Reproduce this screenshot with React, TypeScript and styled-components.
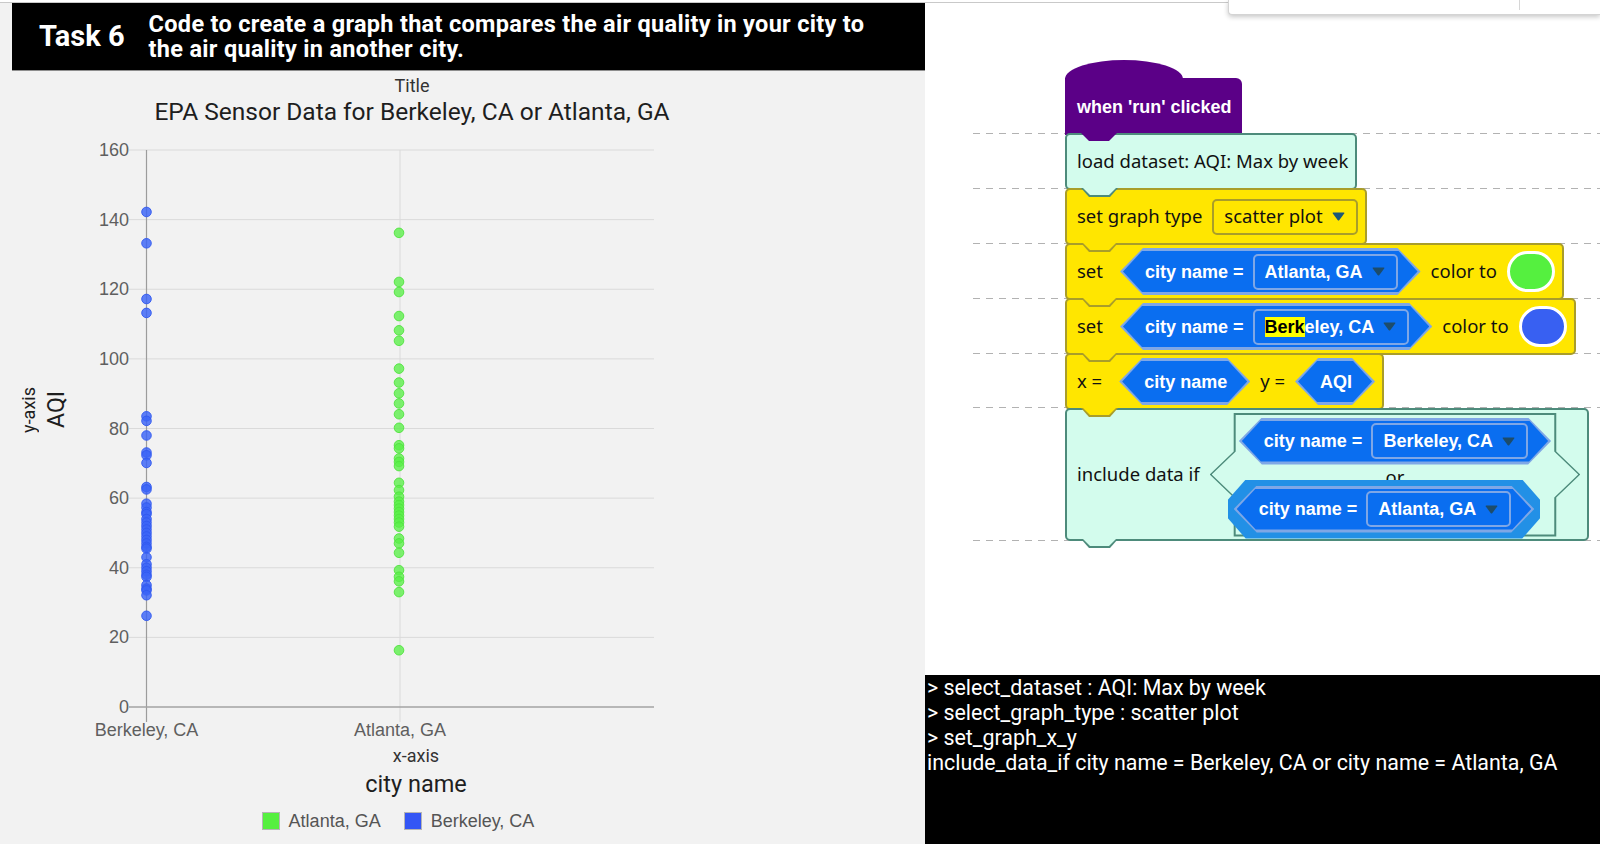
import React from "react";
import styled, { createGlobalStyle } from "styled-components";

const GlobalStyle = createGlobalStyle`
  html, body { margin: 0; padding: 0; background: #ffffff; }
  body { width: 1600px; height: 844px; overflow: hidden; }
  *, *::before, *::after { box-sizing: border-box; }
`;

const SANS = `Roboto, "Liberation Sans", Arial, sans-serif`;
const ARIAL = `"Liberation Sans", Arial, sans-serif`;
const BLOCKFONT = `"Noto Sans", "Liberation Sans", sans-serif`;

const palette = {
  mint: { fill: "#d3fced", line: "#4d8b7b" },
  yellow: { fill: "#ffe600", line: "#a99d2a" },
};
type Tone = keyof typeof palette;

/* ---------- page frame ---------- */
const Page = styled.div`
  position: relative;
  width: 1600px;
  height: 844px;
  display: flex;
  flex-direction: column;
  font-family: ${SANS};
`;
const TopRule = styled.div`
  flex: none;
  height: 3px;
  background: #ffffff;
  border-bottom: 1px solid #c9c9c9;
`;
const Main = styled.main`
  flex: 1;
  min-height: 0;
  display: flex;
`;
const MenuEdge = styled.div`
  position: absolute;
  top: 0;
  right: 0;
  width: 372px;
  height: 15px;
  background: #ffffff;
  border: 1px solid #d4d4d4;
  border-top: none;
  border-right: none;
  border-radius: 0 0 0 4px;
  box-shadow: 0 2px 5px rgba(0, 0, 0, 0.22);
  display: flex;
  justify-content: flex-end;
  padding-right: 80px;
`;
const MenuDivider = styled.span`
  width: 1px;
  height: 10px;
  background: #d6d6d6;
`;

/* ---------- left panel ---------- */
const LeftPanel = styled.section`
  flex: none;
  width: 925px;
  background: #f2f2f2;
  display: flex;
  flex-direction: column;
`;
const Header = styled.header`
  flex: none;
  margin-left: 12px;
  height: 67px;
  background: #000000;
  color: #ffffff;
  display: flex;
  align-items: center;
  gap: 24px;
  padding-left: 27px;
  box-shadow: 0 1px 0 #8e8e8e;
`;
const TaskNumber = styled.h1`
  margin: 0;
  font: 700 29px/1 ${SANS};
  white-space: nowrap;
`;
const TaskText = styled.p`
  margin: 0;
  font: 700 23.5px/25px ${SANS};
  letter-spacing: 0.3px;
  white-space: nowrap;
`;

const Chart = styled.div`
  display: flex;
  flex-direction: column;
  width: 824px;
`;
const CaptionGroup = styled.div<{ $top: number; $left?: number }>`
  margin-top: ${(p) => p.$top}px;
  margin-left: ${(p) => p.$left ?? 0}px;
  display: flex;
  flex-direction: column;
  align-items: center;
  color: #1e1e1e;
`;
const SmallCaption = styled.div`
  font: 400 18px/20px ${SANS};
  color: #333333;
`;
const BigCaption = styled.div<{ $gap: number; $size: number }>`
  margin-top: ${(p) => p.$gap}px;
  font: 400 ${(p) => p.$size}px/26px ${SANS};
  color: #1e1e1e;
  white-space: nowrap;
`;
const PlotRow = styled.div`
  display: flex;
  height: 615px;
`;
const YTitles = styled.div`
  flex: none;
  width: 80px;
  display: flex;
  align-items: center;
  gap: 5px;
  padding: 0 0 46px 19px;
`;
const VerticalLabel = styled.span<{ $size: number; $line: number }>`
  writing-mode: vertical-rl;
  transform: rotate(180deg);
  font: 400 ${(p) => p.$size}px / ${(p) => p.$line}px ${SANS};
  color: #1e1e1e;
  white-space: nowrap;
`;
const PlotSvg = styled.svg`
  display: block;
  flex: none;
  font-family: ${ARIAL};
`;
const Legend = styled.div`
  margin-top: 14px;
  margin-right: 28px;
  display: flex;
  justify-content: center;
  gap: 23px;
`;
const LegendItem = styled.div`
  display: flex;
  align-items: center;
  gap: 9px;
  font: 400 18px/20px ${ARIAL};
  color: #555555;
`;
const LegendSwatch = styled.span<{ $color: string }>`
  width: 18px;
  height: 18px;
  background: ${(p) => p.$color};
  border: 1px solid #b5b5b5;
`;

/* ---------- right side ---------- */
const RightColumn = styled.section`
  flex: 1;
  min-width: 0;
  display: flex;
  flex-direction: column;
`;
const Workspace = styled.div`
  position: relative;
  flex: 1;
  background: #ffffff;
  overflow: hidden;
`;
const Guide = styled.div<{ $top: number }>`
  position: absolute;
  left: 48px;
  right: 0;
  top: ${(p) => p.$top}px;
  height: 1px;
  background: repeating-linear-gradient(to right, #b2b2b2 0 7px, transparent 7px 13px);
`;
const Stack = styled.div`
  position: absolute;
  left: 140px;
  top: 75px;
  display: flex;
  flex-direction: column;
  align-items: flex-start;
`;
const HatBlock = styled.div`
  position: relative;
  height: 57px;
  display: flex;
  align-items: center;
  padding: 0 10px 0 12px;
  background: #5b0087;
  color: #ffffff;
  font: 700 18px/1 ${ARIAL};
  white-space: nowrap;
  border-radius: 0 6px 0 0;
  &::before {
    content: "";
    position: absolute;
    left: 0;
    bottom: calc(100% - 1px);
    width: 118px;
    height: 19px;
    background: #5b0087;
    clip-path: ellipse(59px 19px at 59px 19px);
  }
  &::after {
    content: "";
    position: absolute;
    z-index: 3;
    left: 16px;
    top: calc(100% - 2px);
    width: 36px;
    height: 8px;
    background: #5b0087;
    clip-path: polygon(0 0, 100% 0, calc(100% - 8px) 100%, 8px 100%);
  }
`;
const Block = styled.div<{ $tone: Tone; $height?: number }>`
  position: relative;
  height: ${(p) => p.$height ?? 57}px;
  margin-top: -2px;
  display: flex;
  align-items: center;
  gap: 10px;
  padding: 0 7px 0 10px;
  background: ${(p) => palette[p.$tone].fill};
  border: 2px solid ${(p) => palette[p.$tone].line};
  border-radius: 5px;
  color: #111111;
  font: 400 18.5px/1 ${BLOCKFONT};
  white-space: nowrap;
  &::before {
    content: "";
    position: absolute;
    z-index: 2;
    left: 14px;
    top: 100%;
    width: 37px;
    height: 9px;
    background: ${(p) => palette[p.$tone].line};
    clip-path: polygon(0 0, 100% 0, calc(100% - 8px) 100%, 8px 100%);
  }
  &::after {
    content: "";
    position: absolute;
    z-index: 3;
    left: 16px;
    top: 100%;
    width: 33px;
    height: 7px;
    background: ${(p) => palette[p.$tone].fill};
    clip-path: polygon(0 0, 100% 0, calc(100% - 7px) 100%, 7px 100%);
  }
`;
const Word = styled.span`
  flex: none;
`;
const Dropdown = styled.div<{ $on: "blue" | "yellow" }>`
  flex: none;
  display: flex;
  align-items: center;
  gap: 9px;
  height: 36px;
  padding: 0 11px 0 10px;
  border: 2px solid ${(p) => (p.$on === "blue" ? "#7fa7e6" : "#a99d2a")};
  border-radius: 5px;
  background: ${(p) => (p.$on === "blue" ? "#0a6ef0" : "#ffe600")};
  color: ${(p) => (p.$on === "blue" ? "#ffffff" : "#111111")};
  font: ${(p) => (p.$on === "blue" ? `700 18px/1 ${ARIAL}` : `400 18.5px/1 ${BLOCKFONT}`)};
`;
const Mark = styled.span`
  background: #ffff00;
  color: #000000;
`;
const HexFrame = styled.div<{ $lead?: boolean }>`
  flex: none;
  display: flex;
  height: 47px;
  padding: 3px;
  margin-left: ${(p) => (p.$lead ? 7 : 0)}px;
  background: #7fa7e6;
  clip-path: polygon(23px 0, calc(100% - 23px) 0, 100% 50%, calc(100% - 23px) 100%, 23px 100%, 0 50%);
`;
const HexBody = styled.div`
  flex: 1;
  display: flex;
  align-items: center;
  gap: 9px;
  padding: 0 20px 0 22px;
  background: #0a6ef0;
  color: #ffffff;
  font: 700 18px/1 ${ARIAL};
  clip-path: polygon(19px 0, calc(100% - 19px) 0, 100% 50%, calc(100% - 19px) 100%, 19px 100%, 0 50%);
`;
const Selection = styled.div`
  position: relative;
  z-index: 1;
  display: flex;
  margin: -6px 11px 0 -11px;
  padding: 6px;
  background: #2290e6;
  clip-path: polygon(18px 0, calc(100% - 18px) 0, 100% calc(50% - 9px), 100% calc(50% + 9px), calc(100% - 18px) 100%, 18px 100%, 0 calc(50% + 9px), 0 calc(50% - 9px));
`;
const ColorSwatch = styled.span<{ $color: string }>`
  flex: none;
  width: 48px;
  height: 41px;
  border-radius: 21px;
  border: 3px solid #ffffff;
  background: ${(p) => p.$color};
`;
const OrShape = styled.div`
  position: relative;
  flex: none;
  height: 124px;
  padding: 5px 29px 0;
  display: flex;
  flex-direction: column;
  align-items: center;
  &::before,
  &::after {
    content: "";
    position: absolute;
    z-index: 0;
    clip-path: polygon(
      24px 0, calc(100% - 24px) 0, calc(100% - 24px) calc(50% - 23px), 100% 50%,
      calc(100% - 24px) calc(50% + 23px), calc(100% - 24px) 100%, 24px 100%,
      24px calc(50% + 23px), 0 50%, 24px calc(50% - 23px)
    );
  }
  &::before {
    inset: 0;
    background: #4d8b7b;
  }
  &::after {
    inset: 2px;
    background: #d3fced;
  }
  & > * {
    position: relative;
    z-index: 1;
  }
`;
const OrWord = styled.span`
  margin-top: 3px;
  font: 400 18.5px/18px ${BLOCKFONT};
  color: #111111;
`;

const Console = styled.div`
  flex: none;
  height: 169px;
  background: #000000;
  color: #ffffff;
  padding-left: 2px;
  font: 400 21.4px/25px ${SANS};
`;
const ConsoleLine = styled.div`
  white-space: pre;
`;

/* ---------- drawings ---------- */
const Caret = ({ color }: { color: string }) => (
  <svg width="13" height="9" viewBox="0 0 13 9" aria-hidden="true">
    <path
      d="M1.2 0.5 H11.8 Q12.8 0.5 12.2 1.5 L7.4 7.9 Q6.5 9 5.6 7.9 L0.8 1.5 Q0.2 0.5 1.2 0.5 Z"
      fill={color}
    />
  </svg>
);

const Hex = ({ lead, children }: { lead?: boolean; children: React.ReactNode }) => (
  <HexFrame $lead={lead}>
    <HexBody>{children}</HexBody>
  </HexFrame>
);

const berkeley = [
  142.2, 133.2, 117.2, 113.2, 83.5, 82.2, 78, 73.1, 72.3, 70.1, 63.2, 62.5, 58.4, 57.3, 56,
  55.4, 54, 53, 52, 51, 50, 49, 48, 47, 46, 45.5, 43, 41, 40, 39, 38, 37.4, 35, 34, 33.5,
  32.1, 26.2,
];
const atlanta = [
  136.2, 122.1, 119.2, 112.3, 108.2, 105.2, 97.2, 93.2, 90.1, 87.2, 84.1, 80.2, 75.2, 74.3,
  71.4, 70.4, 69.2, 64.4, 62.3, 60.4, 59, 58, 57, 56, 55, 54, 53, 51.8, 48.4, 47, 44.3, 39.3,
  37.4, 36.1, 33, 16.3,
];

const TOP = 25;
const ZERO = 582;
const AXIS_X = 66.5;
const ATL_X = 320;
const GRID_L = 49;
const GRID_R = 574;
const yOf = (v: number) => ZERO - (v / 160) * (ZERO - TOP);
const ticks = [0, 20, 40, 60, 80, 100, 120, 140, 160];

const ScatterPlot = () => (
  <PlotSvg width={590} height={615} viewBox="0 0 590 615">
    {ticks
      .filter((t) => t > 0)
      .map((t) => (
        <line key={t} x1={GRID_L} x2={GRID_R} y1={yOf(t)} y2={yOf(t)} stroke="#dadada" strokeWidth={1} />
      ))}
    <line x1={ATL_X} x2={ATL_X} y1={TOP} y2={ZERO + 15} stroke="#dadada" strokeWidth={1} />
    <line x1={AXIS_X} x2={AXIS_X} y1={TOP} y2={ZERO + 15} stroke="#9c9c9c" strokeWidth={1.2} />
    <line x1={GRID_L} x2={GRID_R} y1={ZERO} y2={ZERO} stroke="#a3a3a3" strokeWidth={1.4} />
    {ticks.map((t) => (
      <text key={t} x={49} y={yOf(t) + 6} textAnchor="end" fontSize={18} fill="#5f5f5f">
        {t}
      </text>
    ))}
    <text x={AXIS_X} y={ZERO + 29} textAnchor="middle" fontSize={18} fill="#5f5f5f">
      Berkeley, CA
    </text>
    <text x={ATL_X} y={ZERO + 29} textAnchor="middle" fontSize={18} fill="#5f5f5f">
      Atlanta, GA
    </text>
    {atlanta.map((v, i) => (
      <circle key={`a${i}`} cx={ATL_X - 1} cy={yOf(v)} r={4.8} fill="rgba(90,240,72,0.78)" stroke="rgba(80,226,62,0.9)" strokeWidth={1} />
    ))}
    {berkeley.map((v, i) => (
      <circle key={`b${i}`} cx={AXIS_X} cy={yOf(v)} r={4.8} fill="rgba(58,100,246,0.82)" stroke="rgba(48,88,240,0.9)" strokeWidth={1} />
    ))}
  </PlotSvg>
);

const guideTops = [130, 185, 240, 295, 350, 404, 537];

export default function App() {
  return (
    <>
      <GlobalStyle />
      <Page>
        <TopRule />
        <Main>
          <LeftPanel>
            <Header>
              <TaskNumber>Task 6</TaskNumber>
              <TaskText>
                Code to create a graph that compares the air quality in your city to
                <br />
                the air quality in another city.
              </TaskText>
            </Header>
            <Chart>
              <CaptionGroup $top={6}>
                <SmallCaption>Title</SmallCaption>
                <BigCaption $gap={3} $size={24.5}>
                  EPA Sensor Data for Berkeley, CA or Atlanta, GA
                </BigCaption>
              </CaptionGroup>
              <PlotRow>
                <YTitles>
                  <VerticalLabel $size={18} $line={20}>y-axis</VerticalLabel>
                  <VerticalLabel $size={23} $line={26}>AQI</VerticalLabel>
                </YTitles>
                <ScatterPlot />
              </PlotRow>
              <CaptionGroup $top={6} $left={8}>
                <SmallCaption>x-axis</SmallCaption>
                <BigCaption $gap={5} $size={23.5}>
                  city name
                </BigCaption>
              </CaptionGroup>
              <Legend>
                <LegendItem>
                  <LegendSwatch $color="#55f03f" />
                  Atlanta, GA
                </LegendItem>
                <LegendItem>
                  <LegendSwatch $color="#3456f5" />
                  Berkeley, CA
                </LegendItem>
              </Legend>
            </Chart>
          </LeftPanel>
          <RightColumn>
            <Workspace>
              {guideTops.map((t) => (
                <Guide key={t} $top={t} />
              ))}
              <Stack>
                <HatBlock>when 'run' clicked</HatBlock>
                <Block $tone="mint">
                  <Word>load dataset: AQI: Max by week</Word>
                </Block>
                <Block $tone="yellow">
                  <Word>set graph type</Word>
                  <Dropdown $on="yellow">
                    scatter plot
                    <Caret color="#1c5878" />
                  </Dropdown>
                </Block>
                <Block $tone="yellow">
                  <Word>set</Word>
                  <Hex lead>
                    <Word>city name =</Word>
                    <Dropdown $on="blue">
                      Atlanta, GA
                      <Caret color="#1d4c6b" />
                    </Dropdown>
                  </Hex>
                  <Word>color to</Word>
                  <ColorSwatch $color="#55f03f" />
                </Block>
                <Block $tone="yellow">
                  <Word>set</Word>
                  <Hex lead>
                    <Word>city name =</Word>
                    <Dropdown $on="blue">
                      <span>
                        <Mark>Berk</Mark>eley, CA
                      </span>
                      <Caret color="#1d4c6b" />
                    </Dropdown>
                  </Hex>
                  <Word>color to</Word>
                  <ColorSwatch $color="#3860f2" />
                </Block>
                <Block $tone="yellow">
                  <Word>x =</Word>
                  <Hex lead>
                    <Word>city name</Word>
                  </Hex>
                  <Word>y =</Word>
                  <Hex>
                    <Word>AQI</Word>
                  </Hex>
                </Block>
                <Block $tone="mint" $height={133}>
                  <Word>include data if</Word>
                  <OrShape>
                    <Hex>
                      <Word>city name =</Word>
                      <Dropdown $on="blue">
                        Berkeley, CA
                        <Caret color="#1d4c6b" />
                      </Dropdown>
                    </Hex>
                    <OrWord>or</OrWord>
                    <Selection>
                      <Hex>
                        <Word>city name =</Word>
                        <Dropdown $on="blue">
                          Atlanta, GA
                          <Caret color="#1d4c6b" />
                        </Dropdown>
                      </Hex>
                    </Selection>
                  </OrShape>
                </Block>
              </Stack>
            </Workspace>
            <Console>
              <ConsoleLine>&gt; select_dataset : AQI: Max by week</ConsoleLine>
              <ConsoleLine>&gt; select_graph_type : scatter plot</ConsoleLine>
              <ConsoleLine>&gt; set_graph_x_y</ConsoleLine>
              <ConsoleLine>include_data_if city name = Berkeley, CA or city name = Atlanta, GA</ConsoleLine>
            </Console>
          </RightColumn>
        </Main>
        <MenuEdge>
          <MenuDivider />
        </MenuEdge>
      </Page>
    </>
  );
}
